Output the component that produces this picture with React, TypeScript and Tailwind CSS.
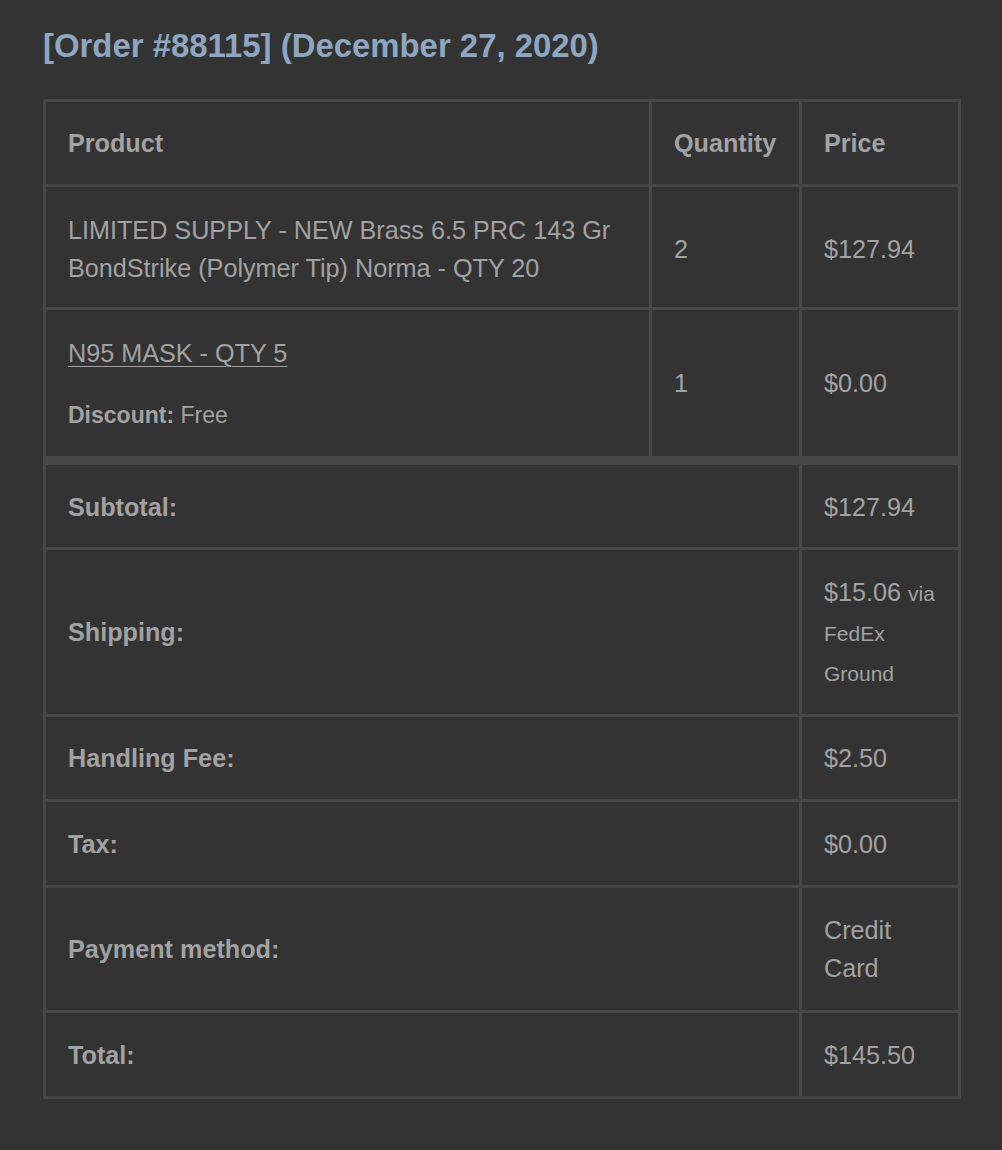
import React from 'react';

const cell = 'border-[3px] border-[#474747] px-[22px] py-[22px] text-left align-middle';

const totals: { label: string; value: React.ReactNode; pad?: string; valueClass?: string }[] = [
  { label: 'Subtotal:', value: '$127.94', pad: 'border-t-[9px] pt-[23px] pb-[21px]' },
  {
    label: 'Shipping:',
    value: (
      <>
        $15.06 <span className="text-[21px] leading-none">via FedEx Ground</span>
      </>
    ),
    valueClass: 'leading-[40px]',
  },
  { label: 'Handling Fee:', value: '$2.50' },
  { label: 'Tax:', value: '$0.00', pad: 'pt-[23px]' },
  { label: 'Payment method:', value: 'Credit Card', pad: 'pt-[23px] pb-[23px]' },
  { label: 'Total:', value: '$145.50', pad: 'pt-[23px]' },
];

export default function App() {
  return (
    <div
      className="min-h-[1150px] bg-[#333333] pt-[25px] pl-[43px] pr-[41px] text-[#a2a2a2]"
      style={{ fontFamily: '"Liberation Sans", Arial, Helvetica, sans-serif' }}
    >
      <h2 className="mb-[32px] text-[32.9px] font-bold leading-[42px] text-[#8ea6c0]">
        [Order #88115] (December 27, 2020)
      </h2>

      <table className="w-full table-fixed border-collapse text-[25.2px] leading-[38px]">
        <colgroup>
          <col className="w-[606px]" />
          <col className="w-[150px]" />
          <col />
        </colgroup>
        <thead>
          <tr>
            <th className={`${cell} font-bold`}>Product</th>
            <th className={`${cell} font-bold`}>Quantity</th>
            <th className={`${cell} font-bold`}>Price</th>
          </tr>
        </thead>
        <tbody>
          <tr>
            <td className={`${cell} pt-[24px] pb-[20px]`}>
              LIMITED SUPPLY - NEW Brass 6.5 PRC 143 Gr BondStrike (Polymer Tip) Norma - QTY 20
            </td>
            <td className={`${cell} pt-[24px] pb-[20px]`}>2</td>
            <td className={`${cell} pt-[24px] pb-[20px]`}>$127.94</td>
          </tr>
          <tr>
            <td className={`${cell} pt-[24px] pb-[22px]`}>
              <a className="underline decoration-1 underline-offset-[4px]">N95 MASK - QTY 5</a>
              <div className="mt-[24px] text-[23px]">
                <strong className="font-bold">Discount:</strong> Free
              </div>
            </td>
            <td className={cell}>1</td>
            <td className={cell}>$0.00</td>
          </tr>
        </tbody>
        <tfoot>
          {totals.map((t) => (
            <tr key={t.label}>
              <th colSpan={2} className={`${cell} font-bold ${t.pad ?? ''}`}>
                {t.label}
              </th>
              <td className={`${cell} ${t.pad ?? ''} ${t.valueClass ?? ''}`}>{t.value}</td>
            </tr>
          ))}
        </tfoot>
      </table>
    </div>
  );
}
